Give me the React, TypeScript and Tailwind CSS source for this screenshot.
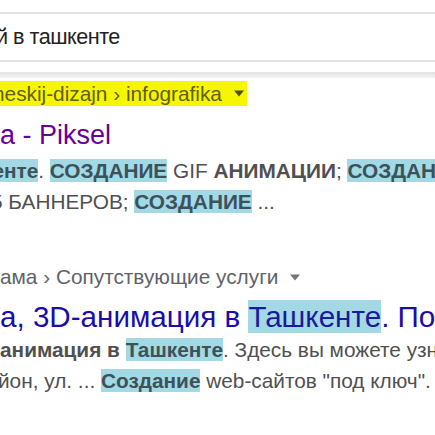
const hl = 'bg-[#a3d9e4] text-[#3b525b]'

function Arrow({ className }: { className: string }) {
  return (
    <svg viewBox="0 0 10 6" className={className}>
      <path d="M0 0h10L5 6z" fill="currentColor" />
    </svg>
  )
}

export default function App() {
  return (
    <div className="h-[435px] w-[435px] overflow-hidden bg-white font-['Liberation_Sans',Arial,sans-serif]">
      <div className="h-[12px]" />
      <div className="flex h-[50px] items-center whitespace-nowrap border-y-2 border-[#e2e2e2] text-[21.6px] tracking-[-0.5px] text-[#222]">
        <span className="ml-[-4px]">й в ташкенте</span>
      </div>
      <div className="h-[10px]" />
      <div className="h-[6px] bg-gradient-to-b from-[#e2e2e2] to-[#f3f3f3]" />
      <div className="h-[3px]" />

      <div className="flex h-[25px] w-[247px] items-center gap-[12px] whitespace-nowrap bg-[#f6f600] text-[20.8px] text-[#5f6014]">
        <span className="ml-[-7px]">neskij-dizajn › infografika</span>
        <Arrow className="h-[7px] w-[10px] text-[#4e4f10]" />
      </div>

      <div className="h-[12px]" />
      <div className="flex h-[34px] items-center whitespace-nowrap text-[27px] text-[#660099]">
        <span>a - Piksel</span>
      </div>
      <div className="h-[3px]" />
      <div className="flex h-[31px] items-center whitespace-nowrap text-[20.8px] text-[#505050]">
        <span className="ml-[-18px]">
          <b className={hl}>кенте</b>. <b className={hl}>СОЗДАНИЕ</b> GIF <b>АНИМАЦИИ</b>;{' '}
          <b className={hl}>СОЗДАНИЕ</b>
        </span>
      </div>
      <div className="flex h-[31px] items-center whitespace-nowrap text-[20.8px] text-[#505050]">
        <span className="ml-[-9px]">
          5 БАННЕРОВ; <b className={hl}>СОЗДАНИЕ</b> ...
        </span>
      </div>

      <div className="h-[45px]" />
      <div className="flex h-[30px] items-center gap-[12px] whitespace-nowrap text-[20.8px] text-[#5f6368]">
        <span>ама › Сопутствующие услуги</span>
        <Arrow className="h-[7px] w-[10px] text-[#70757a]" />
      </div>
      <div className="h-[8px]" />
      <div className="flex h-[34px] items-center whitespace-nowrap text-[29.6px] text-[#1a0dab]">
        <span>
          а, 3D-анимация в <span className="bg-[#a3d9e4] text-[#1a1a9c]">Ташкенте</span>. По
        </span>
      </div>
      <div className="flex h-[31px] items-center whitespace-nowrap text-[20.8px] text-[#505050]">
        <span>
          <b>анимация в</b> <b className={hl}>Ташкенте</b>. Здесь вы можете узнать
        </span>
      </div>
      <div className="flex h-[31px] items-center whitespace-nowrap text-[20.8px] text-[#505050]">
        <span className="ml-[-2px]">
          йон, ул. ... <b className={hl}>Создание</b> web-сайтов "под ключ".
        </span>
      </div>
    </div>
  )
}
